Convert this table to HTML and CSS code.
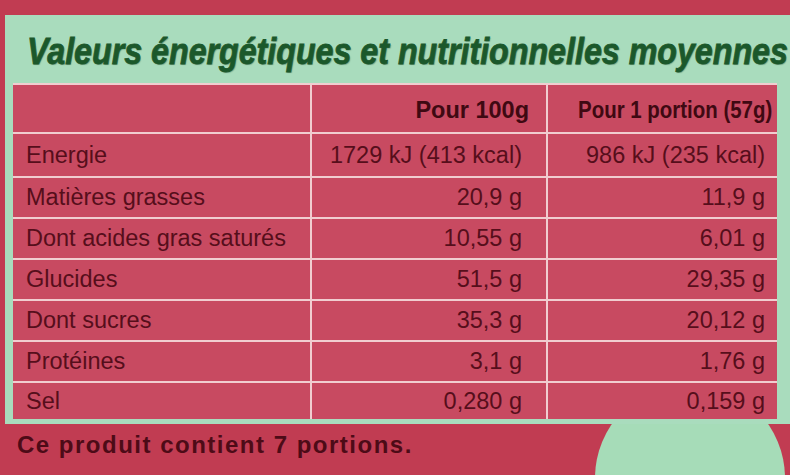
FILE: index.html
```html
<!DOCTYPE html>
<html lang="fr">
<head>
<meta charset="utf-8">
<title>Valeurs nutritionnelles</title>
<link rel="stylesheet" href="styles.css">
</head>
<body>
<div class="page">
  <section class="panel">
    <h1 class="title"><span class="title-text">Valeurs énergétiques et nutritionnelles moyennes</span></h1>
    <table class="nutri">
      <colgroup><col class="c-label"><col class="c-100"><col class="c-portion"></colgroup>
      <thead>
        <tr><th></th><th class="h100">Pour 100g</th><th class="hport"><span class="hport-text">Pour 1 portion (57g)</span></th></tr>
      </thead>
      <tbody>
        <tr class="first"><td>Energie</td><td class="v1">1729 kJ (413 kcal)</td><td class="v2">986 kJ (235 kcal)</td></tr>
        <tr><td>Matières grasses</td><td class="v1">20,9 g</td><td class="v2">11,9 g</td></tr>
        <tr><td>Dont acides gras saturés</td><td class="v1">10,55 g</td><td class="v2">6,01 g</td></tr>
        <tr><td>Glucides</td><td class="v1">51,5 g</td><td class="v2">29,35 g</td></tr>
        <tr><td>Dont sucres</td><td class="v1">35,3 g</td><td class="v2">20,12 g</td></tr>
        <tr><td>Protéines</td><td class="v1">3,1 g</td><td class="v2">1,76 g</td></tr>
        <tr class="last"><td>Sel</td><td class="v1">0,280 g</td><td class="v2">0,159 g</td></tr>
      </tbody>
    </table>
  </section>
  <p class="note">Ce produit contient 7 portions.</p>
  <div class="blob"></div>
</div>
</body>
</html>
```
FILE: styles.css
```css
html, body {
  margin: 0;
  padding: 0;
}
body {
  background: #c13c52;
  width: 790px;
  height: 475px;
  overflow: hidden;
  font-family: "Liberation Sans", Arial, sans-serif;
}
.page {
  position: relative;
  width: 790px;
  height: 475px;
  padding-top: 15px;
  box-sizing: border-box;
  overflow: hidden;
}
.panel {
  position: relative;
  z-index: 1;
  margin-left: 5px;
  background: #a9dcbd;
  padding: 0 13px 5px 8px;
}
.title {
  margin: 0;
  height: 68px;
  box-sizing: border-box;
  padding: 17px 0 0 14px;
  font-weight: bold;
  font-style: italic;
  font-size: 37px;
  line-height: 40px;
  color: #1b582b;
  white-space: nowrap;
}
.title-text {
  display: inline-block;
  transform: scaleX(0.87);
  transform-origin: 0 50%;
  -webkit-text-stroke: 0.8px #1b582b;
  text-shadow: 1px 1px 1px rgba(20, 60, 30, 0.35);
}
.nutri {
  width: 764px;
  border-collapse: collapse;
  background: #c84a61;
  table-layout: fixed;
  color: #560e1b;
  font-size: 23.5px;
}
.c-label { width: 298px; }
.c-100 { width: 236px; }
.c-portion { width: 230px; }
.nutri th, .nutri td {
  border: 2px solid #f1cdd0;
  padding: 0;
  white-space: nowrap;
}
.nutri tr > :first-child { border-left: none; }
.nutri tr > :last-child { border-right: none; }
.nutri tbody tr:last-child td { border-bottom: none; }
.nutri th {
  height: 44px;
  font-weight: bold;
  color: #3f0912;
  text-align: right;
  vertical-align: middle;
  padding-top: 3px;
}
.h100 { padding-right: 17px !important; }
.hport { padding-right: 5px !important; }
.hport-text {
  display: inline-block;
  transform: scaleX(0.87);
  transform-origin: 100% 50%;
}
.nutri td {
  height: 39px;
  vertical-align: middle;
}
.nutri tr.first td { height: 42px; }
.nutri tr.last td { height: 36px; }
.nutri td:first-child { padding-left: 13px; }
.v1 { text-align: right; padding-right: 24px !important; }
.v2 { text-align: right; padding-right: 12px !important; }
.note {
  margin: 7px 0 0 17px;
  font-weight: bold;
  font-size: 24px;
  letter-spacing: 1.5px;
  color: #4d0b17;
}
.blob {
  position: absolute;
  left: 595px;
  top: 383px;
  width: 190px;
  height: 190px;
  border-radius: 50%;
  background: #a6dcb8;
  z-index: 0;
}
```
